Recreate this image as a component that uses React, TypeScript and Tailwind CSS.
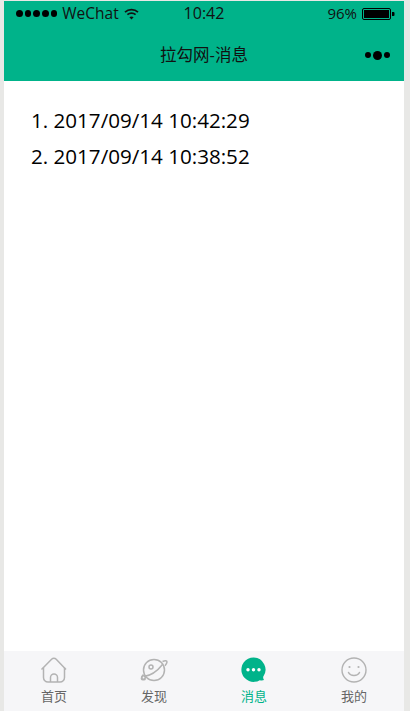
const F = '[font-family:"Open_Sans","Noto_Sans_CJK_SC",sans-serif]';

function Wifi() {
  return (
    <svg width="15" height="12" viewBox="0 0 15 12" fill="none" stroke="#111" strokeWidth="1.7">
      <path d="M1 4.2C4.6.8 10.4.8 14 4.2" />
      <path d="M3.4 6.6c2.3-2.1 5.900-2.100 8.200 0" />
      <path d="M7.500 11.500 5.400 9.200c1.200-1 3-1 4.200 0z" fill="#111" stroke="none" />
    </svg>
  );
}

function Battery() {
  return (
    <svg width="33" height="12" viewBox="0 0 33 12">
      <rect x="0.5" y="0.5" width="28" height="11" rx="1.5" fill="none" stroke="#000" />
      <rect x="2" y="2" width="25" height="8" fill="#000" />
      <path d="M30 4h1.500a1 1 0 0 1 1 1v2a1 1 0 0 1-1 1H30z" fill="#000" />
    </svg>
  );
}

function Home() {
  return (
    <svg width="28" height="26" viewBox="0 0 28 26" fill="none" stroke="#b3b3b3" strokeWidth="1.5">
      <path d="M1.500 12.500 11.600 2.200a3.200 3.200 0 0 1 4.600 0L26 12.500" />
      <path d="M3.500 10.500v10a4.500 4.500 0 0 0 4.500 4.500h12a4.500 4.500 0 0 0 4.500-4.500v-10" />
      <path d="M10.500 25v-4.500a3.500 3.500 0 0 1 7 0V25" />
    </svg>
  );
}

function Planet() {
  return (
    <svg width="28" height="26" viewBox="0 0 28 26" fill="none" stroke="#b3b3b3" strokeWidth="1.5">
      <circle cx="14" cy="13" r="10.500" />
      <circle cx="11" cy="10" r="2" />
      <path d="M4 19.500c6-.8 13-5 18.500-12" />
      <path d="M22.500 4.500c2.500-1 4.500-1 4.500.5 0 1-.8 2.300-2 3.800" />
      <path d="M3.500 17.500c-1.500 2-2.500 3.500-2 4.500.4.900 2 .9 4 .2" />
      <circle cx="3.500" cy="20.500" r="1.800" />
    </svg>
  );
}

function Chat() {
  return (
    <svg width="26" height="26" viewBox="0 0 26 26">
      <path d="M12.500 .5a12.200 12.200 0 1 0 6.300 22.700c1.500.3 3 .3 4.200-.1-.7-1-1-2-.8-3.300A12.200 12.200 0 0 0 12.500 .5z" fill="#00b38a" />
      <circle cx="7" cy="12.700" r="1.700" fill="#fff" />
      <circle cx="12.500" cy="12.700" r="1.700" fill="#fff" />
      <circle cx="18" cy="12.700" r="1.700" fill="#fff" />
    </svg>
  );
}

function Smile() {
  return (
    <svg width="26" height="26" viewBox="0 0 26 26" fill="none" stroke="#b3b3b3" strokeWidth="1.4">
      <circle cx="13" cy="13" r="12" />
      <circle cx="8.500" cy="10" r="1.100" fill="#b3b3b3" stroke="none" />
      <circle cx="17.500" cy="10" r="1.100" fill="#b3b3b3" stroke="none" />
      <path d="M7.500 15.500c2 4 9 4 11 0" strokeWidth="1.500" strokeLinecap="round" />
    </svg>
  );
}

function Tab({ icon, label, active }: { icon: React.ReactNode; label: string; active?: boolean }) {
  return (
    <div className="flex flex-col items-center">
      <div className="flex h-[26px] items-center justify-center">{icon}</div>
      <span className={`mt-[5px] text-[13px] leading-[17px] ${active ? "text-[#00b38a]" : "text-[#666666]"}`}>{label}</span>
    </div>
  );
}

export default function App() {
  return (
    <div className={`h-[711px] w-[410px] bg-[#e8e8e6] pr-[6px] pl-[4px] ${F}`}>
      <div className="flex h-full flex-col bg-white">
        <header className="h-[81px] border-t border-[#e8e8e6] bg-[#00b38a] text-[#111]">
          <div className="grid h-[25px] grid-cols-3 items-center pr-[9px] pl-[12px]">
            <div className="flex items-center gap-[5px] text-[15.5px] whitespace-nowrap">
              <span className="flex gap-[2.200px]">
                <i className="size-[6.500px] rounded-full bg-black" />
                <i className="size-[6.500px] rounded-full bg-black" />
                <i className="size-[6.500px] rounded-full bg-black" />
                <i className="size-[6.500px] rounded-full bg-black" />
                <i className="size-[6.500px] rounded-full bg-black" />
              </span>
              <span className="leading-none">WeChat</span>
              <Wifi />
            </div>
            <div className="pr-[3px] pb-[2px] text-center text-[16px] leading-none">10:42</div>
            <div className="flex items-center justify-end gap-[5px] text-[15px] leading-none">
              96%
              <Battery />
            </div>
          </div>
          <div className="relative flex h-[55px] items-center justify-center pt-[3px] text-[16.500px]">
            拉勾网-消息
            <div className="absolute right-[14px] flex items-center gap-[2px]">
              <i className="size-[6px] rounded-full bg-black" />
              <i className="size-[9px] rounded-full bg-black" />
              <i className="size-[6px] rounded-full bg-black" />
            </div>
          </div>
        </header>
        <main className="flex-1 pt-[21px] pl-[27px] text-[20.600px] leading-[36px] text-black">
          <div>1. 2017/09/14 10:42:29</div>
          <div>2. 2017/09/14 10:38:52</div>
        </main>
        <nav className="grid h-[60px] grid-cols-4 bg-[#f6f6f8] pt-[6px]">
          <Tab icon={<Home />} label="首页" />
          <Tab icon={<Planet />} label="发现" />
          <Tab icon={<Chat />} label="消息" active />
          <Tab icon={<Smile />} label="我的" />
        </nav>
      </div>
    </div>
  );
}
